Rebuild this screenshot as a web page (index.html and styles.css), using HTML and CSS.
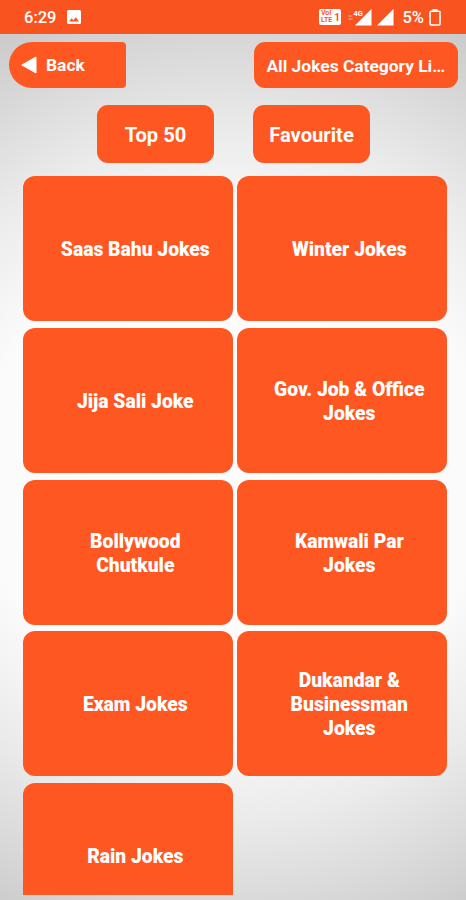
FILE: index.html
```
<!DOCTYPE html>
<html lang="en">
<head>
    <meta charset="UTF-8">
    <meta name="viewport" content="width=device-width, initial-scale=1.0">
    <title>All Jokes Category List</title>
    <link rel="stylesheet" href="styles.css">
</head>
<body>

    <div class="status-bar">
        <span class="time">6:29</span>
        <svg class="icon-image" width="14" height="14" viewBox="0 0 14 14">
            <path fill="#fff" fill-rule="evenodd" d="M1.5 0h11A1.5 1.5 0 0 1 14 1.5v11a1.5 1.5 0 0 1-1.5 1.5h-11A1.5 1.5 0 0 1 0 12.5v-11A1.5 1.5 0 0 1 1.5 0zM2 11.5h10L8.8 7.2 6.4 10.2 4.7 8.2z"/>
        </svg>
        <div class="status-right">
            <div class="volte">
                <div class="volte-text"><span>VoI</span><span>LTE</span></div>
                <span class="volte-sim">1</span>
            </div>
            <svg class="icon-signal-4g" width="24" height="18" viewBox="0 0 24 18">
                <path fill="#fff" d="M23.5 1v16.5H7z"/>
                <path stroke="#fff" stroke-opacity=".6" d="M.5 8h4M.5 11h4"/>
                <text class="net" x="5.5" y="7.5">4G</text>
            </svg>
            <svg class="icon-signal" width="17" height="17" viewBox="0 0 17 17">
                <path fill="#fff" d="M16.5 0v16.5H0z"/>
            </svg>
            <span class="percent">5%</span>
            <svg class="icon-battery" width="12" height="17" viewBox="0 0 12 17">
                <path fill="#fff" d="M3.5 0h5v2h-5z"/>
                <rect x="1" y="2.2" width="10" height="13.8" rx="1" fill="none" stroke="#fff" stroke-width="1.6"/>
            </svg>
        </div>
    </div>

    <div class="header">
        <button class="back">
            <svg width="16" height="18" viewBox="0 0 16 18">
                <path fill="#fff" stroke="#fff" stroke-linejoin="round" d="M.8 9L15 1v16z"/>
            </svg>
            Back
        </button>
        <div class="title">All Jokes Category Li…</div>
    </div>

    <div class="tabs">
        <button class="tab">Top 50</button>
        <button class="tab">Favourite</button>
    </div>

    <div class="categories">
        <div class="card">Saas Bahu Jokes</div>
        <div class="card">Winter Jokes</div>
        <div class="card">Jija Sali Joke</div>
        <div class="card">Gov. Job &amp; Office Jokes</div>
        <div class="card">Bollywood Chutkule</div>
        <div class="card">Kamwali Par Jokes</div>
        <div class="card">Exam Jokes</div>
        <div class="card">Dukandar &amp; Businessman Jokes</div>
        <div class="card">Rain Jokes</div>
    </div>

</body>
</html>
```
FILE: styles.css
```
* {
    box-sizing: border-box;
}
body {
    margin: 0;
    height: 900px;
    overflow: hidden;
    background: radial-gradient(ellipse 450px 440px at 50% 475px, #fdfdfd 0%, #fbfbfb 56%, #ebebeb 78%, #dcdcdc 94%, #cbcbcb 112%);
    font-family: Roboto, 'Liberation Sans', sans-serif;
    color: #fff;
}
button {
    border: none;
    padding: 0;
    font-family: inherit;
    color: #fff;
    cursor: pointer;
}
.status-bar {
    display: flex;
    align-items: center;
    height: 34px;
    padding: 0 25px 0 24px;
    background-color: #f95420;
    font-size: 16.5px;
    font-weight: 500;
}
.icon-image {
    margin-left: 11px;
}
.status-right {
    display: flex;
    align-items: center;
    margin-left: auto;
}
.volte {
    display: flex;
    align-items: center;
    justify-content: center;
    gap: 2px;
    width: 22px;
    height: 16px;
    border-radius: 2px;
    background-color: #fff;
    color: #f95420;
    font-weight: 700;
}
.volte-text {
    display: flex;
    flex-direction: column;
    font-size: 7px;
    line-height: 7px;
}
.volte-sim {
    font-size: 10px;
}
.icon-signal-4g {
    margin-left: 7px;
}
.net {
    font-size: 7.5px;
    font-weight: 700;
    fill: #fff;
    stroke: #f95420;
    stroke-width: 1.5px;
    paint-order: stroke;
}
.icon-signal {
    margin-left: 5px;
}
.percent {
    margin-left: 8px;
}
.icon-battery {
    margin-left: 5px;
}
.header {
    display: flex;
    justify-content: space-between;
    padding: 7.5px 8px 0 9px;
}
.back {
    display: flex;
    align-items: center;
    gap: 9px;
    width: 117px;
    height: 46.5px;
    padding-left: 12px;
    border-radius: 23px 4px 4px 23px;
    background-color: #ff5722;
    font-size: 17.4px;
    font-weight: 700;
}
.title {
    width: 204.5px;
    height: 46.5px;
    border-radius: 11px;
    background-color: #ff5722;
    font-size: 17.4px;
    font-weight: 700;
    line-height: 48px;
    text-align: center;
    white-space: nowrap;
}
.tabs {
    display: flex;
    justify-content: center;
    gap: 39px;
    padding-top: 17px;
}
.tab {
    width: 117px;
    height: 58px;
    padding: 2px 0 0 1px;
    border-radius: 11px;
    background-color: #ff5722;
    font-size: 20.2px;
    font-weight: 700;
}
.categories {
    display: grid;
    grid-template-columns: 210px 210px;
    grid-auto-rows: 145px;
    gap: 6.7px 4px;
    height: 718.5px;
    margin: 13.4px 19px 0 23.3px;
    overflow: hidden;
}
.card {
    display: flex;
    align-items: center;
    justify-content: center;
    padding: 3px 20px 0 34px;
    border-radius: 12px;
    background-color: #ff5722;
    font-size: 19.3px;
    font-weight: 900;
    line-height: 24px;
    text-align: center;
}
```
